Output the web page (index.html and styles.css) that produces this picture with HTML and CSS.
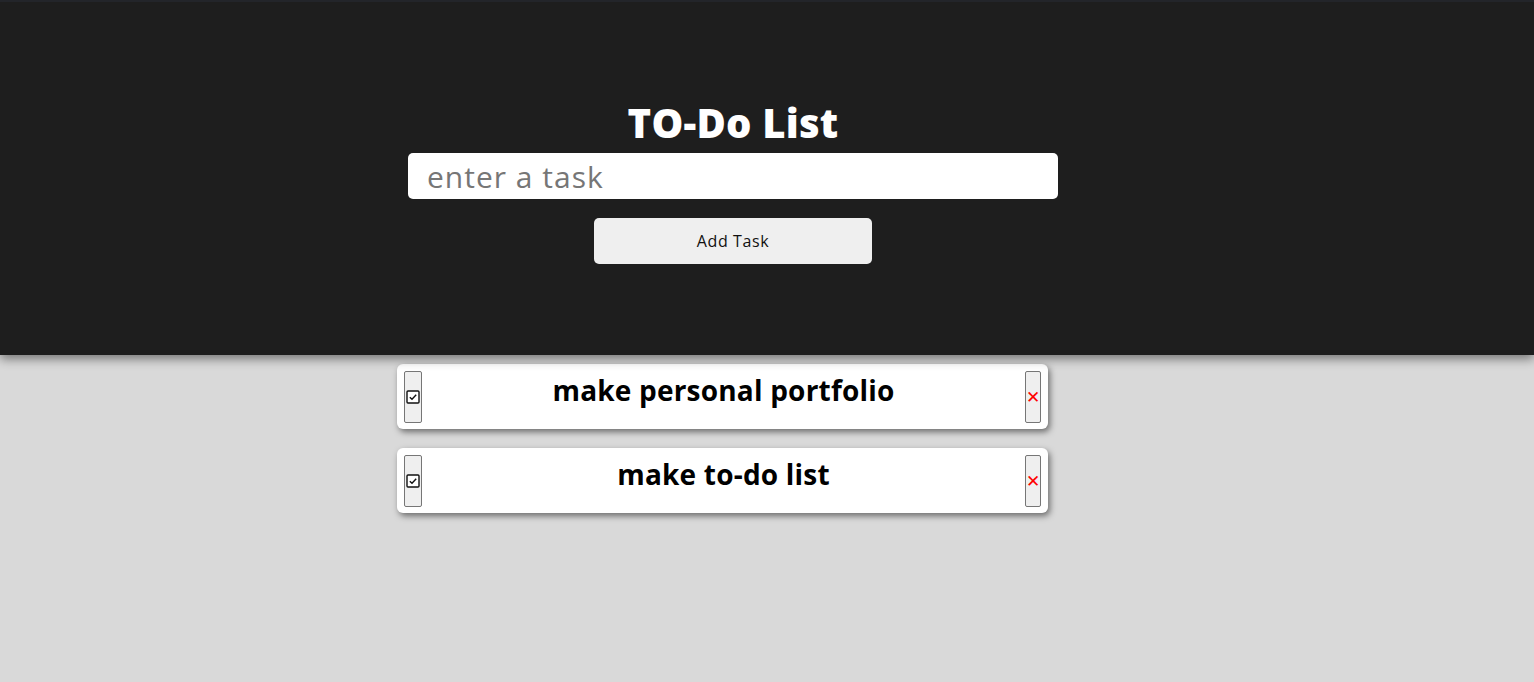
FILE: index.html
```html
<!DOCTYPE html>
<html>
<head>
<meta charset="utf-8">
<link rel="stylesheet" href="styles.css">
</head>
<body>
<header class="top">
  <h1 class="title">TO-Do List</h1>
  <input class="task-input" type="text" placeholder="enter a task">
  <button class="add-btn">Add Task</button>
</header>
<main class="list">
  <div class="card">
    <button class="side-btn check-btn"><svg width="14" height="14" viewBox="0 0 14 14"><rect x="1" y="1" width="12" height="12" rx="1" fill="#fff" stroke="#111" stroke-width="1.4"/><path d="M3.8 7.2 L6 9.3 L10.2 4.8" fill="none" stroke="#111" stroke-width="1.4"/></svg></button>
    <span class="card-text">make personal portfolio</span>
    <button class="side-btn del-btn">✕</button>
  </div>
  <div class="card">
    <button class="side-btn check-btn"><svg width="14" height="14" viewBox="0 0 14 14"><rect x="1" y="1" width="12" height="12" rx="1" fill="#fff" stroke="#111" stroke-width="1.4"/><path d="M3.8 7.2 L6 9.3 L10.2 4.8" fill="none" stroke="#111" stroke-width="1.4"/></svg></button>
    <span class="card-text">make to-do list</span>
    <button class="side-btn del-btn">✕</button>
  </div>
</main>
</body>
</html>
```

FILE: styles.css
```css
html, body {
  margin: 0;
  padding: 0;
}
body {
  background: #d9d9d9;
  font-family: "Open Sans", "Liberation Sans", sans-serif;
  min-height: 682px;
}
.top {
  background: #1e1e1e;
  border-top: 2px solid #23252a;
  box-sizing: border-box;
  height: 355px;
  display: flex;
  flex-direction: column;
  align-items: center;
  padding-top: 96px;
  padding-right: 68px;
  box-shadow: 0 4px 10px rgba(0,0,0,0.45);
  position: relative;
}
.title {
  margin: 0;
  color: #fff;
  font-size: 40px;
  line-height: 50px;
  font-weight: 800;
  letter-spacing: 0.2px;
}
.task-input {
  margin-top: 5px;
  width: 650px;
  height: 46px;
  box-sizing: border-box;
  border: none;
  border-radius: 5px;
  padding: 0 19px;
  font-family: inherit;
  font-size: 30px;
  letter-spacing: 1px;
  color: #333;
  outline: none;
}
.task-input::placeholder {
  color: #767676;
}
.add-btn {
  margin-top: 19px;
  width: 278px;
  height: 46px;
  border: none;
  border-radius: 5px;
  background: #efefef;
  font-family: inherit;
  font-size: 16px;
  letter-spacing: 0.6px;
  color: #111;
}
.list {
  display: flex;
  flex-direction: column;
  align-items: center;
  gap: 19px;
  padding-top: 9px;
  padding-right: 89px;
}
.card {
  width: 651px;
  height: 65px;
  box-sizing: border-box;
  background: #fff;
  border-radius: 6px;
  box-shadow: 2px 3px 6px rgba(0,0,0,0.5);
  display: flex;
  align-items: flex-start;
  padding: 7px 7px 6px 7px;
}
.side-btn {
  height: 52px;
  padding: 0;
  background: #efefef;
  border: 1px solid #767676;
  border-radius: 2px;
  display: flex;
  align-items: center;
  justify-content: center;
  flex: none;
}
.check-btn {
  width: 18px;
}
.del-btn {
  width: 16px;
  color: #ff0000;
  font-size: 17px;
  font-weight: normal;
  font-family: "DejaVu Sans", sans-serif;
}
.card-text {
  flex: 1;
  text-align: center;
  font-size: 28px;
  font-weight: 700;
  color: #000;
  line-height: 40px;
  margin-top: -1px;
  letter-spacing: 0.2px;
}
```
